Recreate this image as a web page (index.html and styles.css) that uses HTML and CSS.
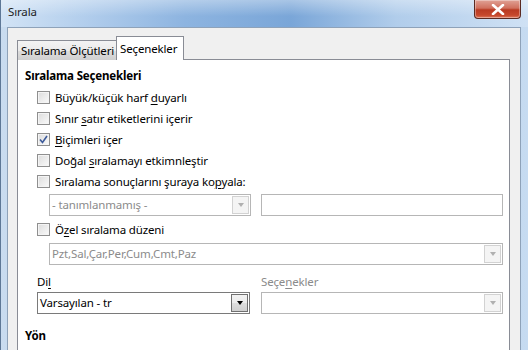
FILE: index.html
```html
<!DOCTYPE html>
<html lang="tr">
<head>
  <meta charset="UTF-8">
  <title>Sırala</title>
  <link rel="stylesheet" href="styles.css">
</head>
<body>

<div class="window">
  <div class="titlebar">
    <span class="title">Sırala</span>
    <div class="close-button">
      <svg width="14" height="11" viewBox="0 0 14 11">
        <path d="M2 1 L12 10 M12 1 L2 10" stroke="#fff" stroke-width="2.6" stroke-linecap="round"/>
      </svg>
    </div>
  </div>

  <div class="client">
    <div class="tabs">
      <div class="tab">Sıralama Ölçütleri</div>
      <div class="tab active">Seçenekler</div>
    </div>

    <div class="panel">
      <div class="section-title">Sıralama Seçenekleri</div>

      <label class="check-row"><span class="checkbox"></span><span>Büyük/küçük harf <u>d</u>uyarlı</span></label>
      <label class="check-row"><span class="checkbox"></span><span>Sınır <u>s</u>atır etiketlerini içerir</span></label>
      <label class="check-row"><span class="checkbox checked">
        <svg width="9" height="9" viewBox="0 0 9 9"><path d="M1 4.5 L3.5 7.5 L8 1" fill="none" stroke="#3c5a9a" stroke-width="1.6"/></svg>
      </span><span><u>B</u>içimleri içer</span></label>
      <label class="check-row"><span class="checkbox"></span><span>Doğal <u>s</u>ıralamayı etkimnleştir</span></label>
      <label class="check-row"><span class="checkbox"></span><span>Sıralama sonuçlarını şuraya ko<u>p</u>yala:</span></label>

      <div class="field-row indent-2">
        <div class="combo disabled small">
          <span class="combo-text">- tanımlanmamış -</span>
          <span class="combo-button"><span class="arrow"></span></span>
        </div>
        <div class="textbox"></div>
      </div>

      <label class="check-row after-field"><span class="checkbox"></span><span>Ö<u>z</u>el sıralama düzeni</span></label>

      <div class="field-row indent-2 wide-row">
        <div class="combo disabled grow">
          <span class="combo-text">Pzt,Sal,Çar,Per,Cum,Cmt,Paz</span>
          <span class="combo-button"><span class="arrow"></span></span>
        </div>
      </div>

      <div class="label-row indent-1">
        <span class="label lang">Di<u>l</u></span>
        <span class="label muted">Seçe<u>n</u>ekler</span>
      </div>

      <div class="field-row indent-1">
        <div class="combo lang-combo">
          <span class="combo-text dark">Varsayılan - tr</span>
          <span class="combo-button enabled"><span class="arrow"></span></span>
        </div>
        <div class="combo disabled grow">
          <span class="combo-text"></span>
          <span class="combo-button"><span class="arrow"></span></span>
        </div>
      </div>

      <div class="section-title bottom">Yön</div>
    </div>
  </div>
</div>

</body>
</html>
```

FILE: styles.css
```css
body {
  margin: 0;
  font-family: "Noto Sans", "Open Sans", sans-serif;
  font-size: 11.5px;
  letter-spacing: -0.15px;
  color: #000;
  background: #fff;
}

.window {
  width: 528px;
  height: 350px;
  overflow: hidden;
  background: linear-gradient(90deg, #c9dcf0 0%, #b7d0ec 30%, #a9c6e8 60%, #c6dbf1 100%);
  border-left: 1px solid #5e7897;
  box-sizing: border-box;
}

.titlebar {
  display: flex;
  justify-content: space-between;
  align-items: flex-start;
  height: 27px;
  background:
    linear-gradient(180deg, rgba(255,255,255,0.35) 0%, rgba(255,255,255,0) 60%),
    linear-gradient(90deg, #d2e3f5 0%, #b4cfed 15%, #8db4e0 35%, #7aa6d8 55%, #b1cdeb 75%, #cfe1f4 100%);
}

.title {
  padding: 4px 0 0 7px;
  font-size: 11.5px;
  color: #1e1e1e;
}

.close-button {
  display: flex;
  align-items: center;
  justify-content: center;
  width: 45px;
  height: 18px;
  margin-right: 7px;
  border: 1px solid #5a2a22;
  border-top: none;
  border-radius: 0 0 4px 4px;
  background: linear-gradient(180deg, #e0a296 0%, #d0705e 45%, #b93a22 55%, #c6482c 85%, #e07a5e 100%);
  box-shadow: inset 0 0 0 1px rgba(255,255,255,0.35);
}

.client {
  margin: 0 7px 0 6px;
  height: 330px;
  background: #f0f0f0;
  border: 1px solid #8ea2b9;
  padding: 8px 10px 0 9px;
}

.tabs {
  display: flex;
  align-items: flex-end;
  height: 24px;
  margin-bottom: -1px;
  position: relative;
  z-index: 1;
}

.tab {
  height: 20px;
  padding: 0 2px 0 3px;
  line-height: 19px;
  border: 1px solid #898c95;
  border-bottom: none;
  background: linear-gradient(180deg, #f3f3f3 0%, #ebebeb 50%, #dddddd 51%, #cfcfcf 100%);
  box-sizing: border-box;
  white-space: nowrap;
}

.tab.active {
  height: 24px;
  padding: 2px 6px 0 3px;
  margin-left: -1px;
  background: #fff;
}

.panel {
  background: #fff;
  border: 1px solid #898c95;
  height: 300px;
  padding: 8px 6px 0 7px;
}

.section-title {
  height: 16px;
  line-height: 16px;
  font-weight: bold;
}

.section-title.bottom {
  margin-top: 14px;
}

.check-row {
  display: flex;
  align-items: center;
  height: 21px;
  padding-left: 12px;
  white-space: nowrap;
}

.section-title + .check-row {
  margin-top: 3px;
}

.check-row.after-field {
  margin-top: 3px;
}

.checkbox {
  display: flex;
  align-items: center;
  justify-content: center;
  width: 13px;
  height: 13px;
  margin-right: 5px;
  box-sizing: border-box;
  border: 1px solid #8f8f8f;
  background: linear-gradient(135deg, #dcdcdc 0%, #eeeeee 60%, #fafafa 100%);
  box-shadow: inset 0 0 0 1px #f4f4f4;
}

u {
  text-underline-offset: 2px;
}

.field-row {
  display: flex;
  gap: 10px;
  margin-top: 2px;
}

.field-row.wide-row {
  margin-top: 3px;
}

.indent-1 {
  padding-left: 12px;
}

.indent-2 {
  padding-left: 24px;
}

.combo {
  display: flex;
  height: 22px;
  box-sizing: border-box;
  border: 1px solid #7a7a7a;
  background: #fff;
}

.combo.disabled {
  border-color: #b6b6b6;
  color: #8b8b8b;
}

.combo.small {
  width: 202px;
}

.combo.lang-combo {
  width: 213px;
  margin-right: 1px;
}

.combo.grow {
  flex: 1;
}

.combo-text {
  flex: 1;
  padding-left: 2px;
  line-height: 19px;
  white-space: nowrap;
  overflow: hidden;
}

.combo-text.dark {
  color: #000;
}

.combo-button {
  display: flex;
  align-items: center;
  justify-content: center;
  width: 17px;
  margin: 1px;
  box-sizing: border-box;
  border: 1px solid #d2d2d2;
  background: #f4f4f4;
}

.combo-button.enabled {
  border-color: #707070;
  background: linear-gradient(180deg, #f2f2f2 0%, #ebebeb 50%, #dddddd 51%, #cfcfcf 100%);
}

.arrow {
  width: 0;
  height: 0;
  border-left: 3.5px solid transparent;
  border-right: 3.5px solid transparent;
  border-top: 4px solid #b0b0b0;
}

.combo-button.enabled .arrow {
  border-top-color: #000;
}

.textbox {
  flex: 1;
  height: 22px;
  box-sizing: border-box;
  border: 1px solid #b6b6b6;
  background: #fff;
}

.label-row {
  display: flex;
  height: 16px;
  line-height: 16px;
  margin-top: 9px;
}

.label.lang {
  width: 224px;
}

.label.muted {
  color: #8b8b8b;
}
```
